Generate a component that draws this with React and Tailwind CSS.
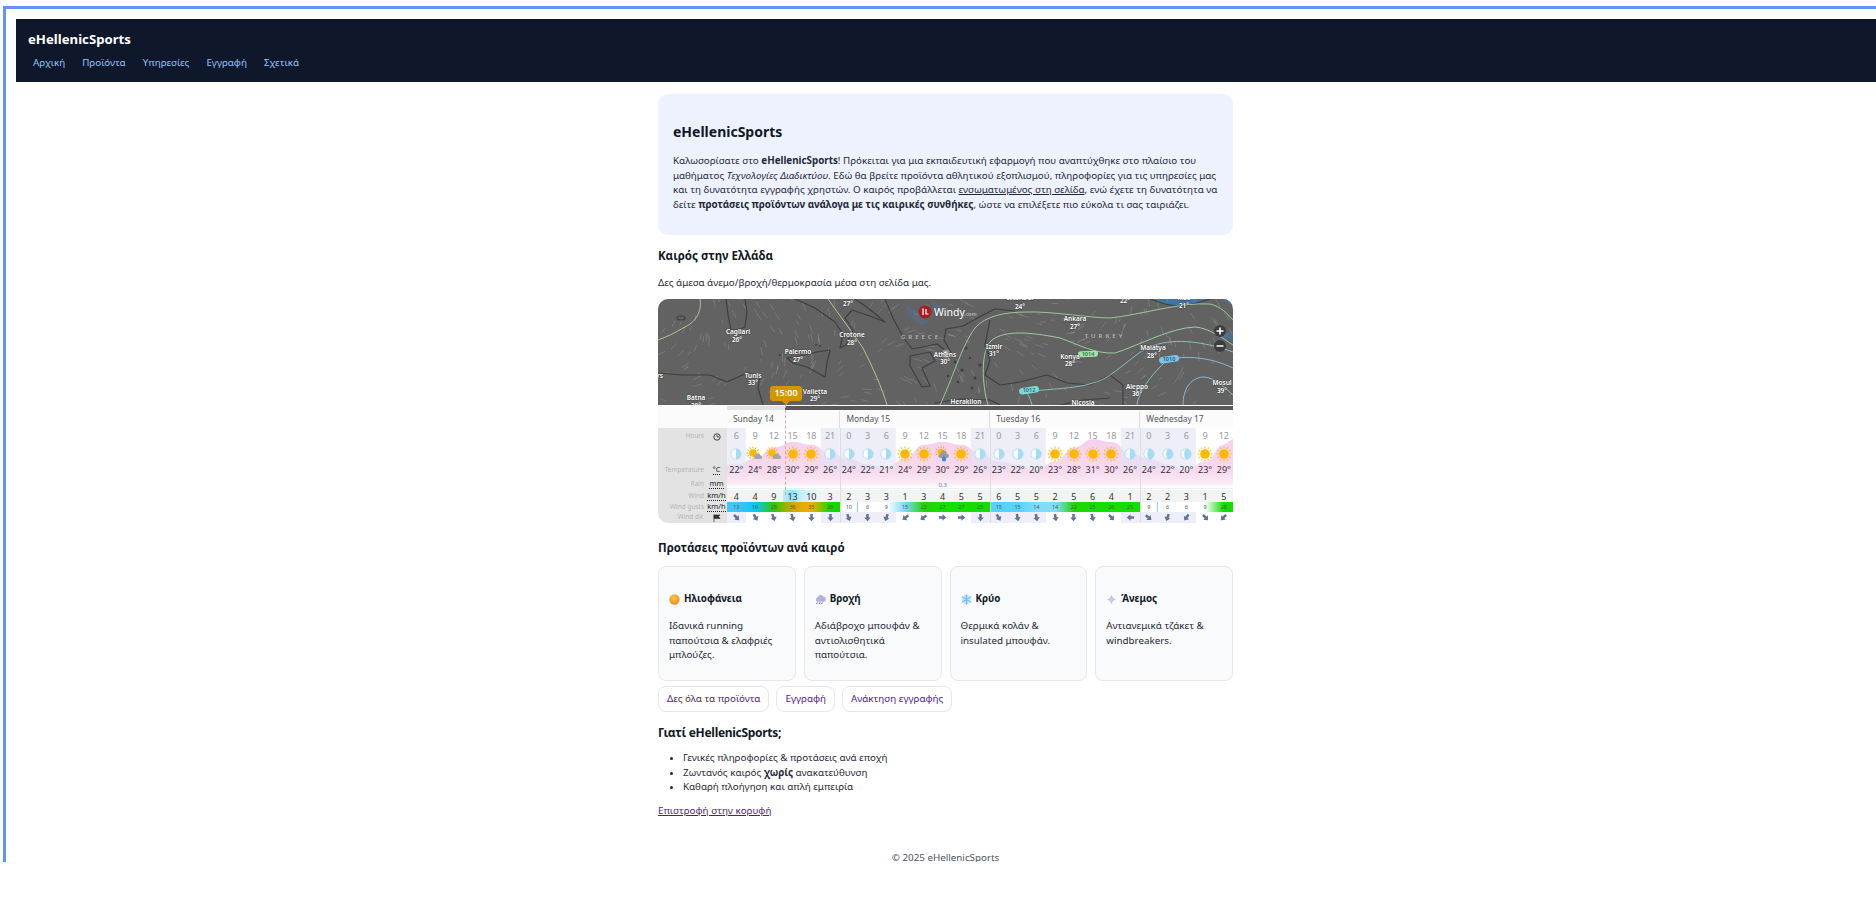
import React from 'react';

const COL = 18.75;
const days = [
  { name: 'Sunday 14', hours: [6, 9, 12, 15, 18, 21] },
  { name: 'Monday 15', hours: [0, 3, 6, 9, 12, 15, 18, 21] },
  { name: 'Tuesday 16', hours: [0, 3, 6, 9, 12, 15, 18, 21] },
  { name: 'Wednesday 17', hours: [0, 3, 6, 9, 12] },
];
const hours = days.flatMap((d) => d.hours);
const temps = [22, 24, 28, 30, 29, 26, 24, 22, 21, 24, 29, 30, 29, 26, 23, 22, 20, 23, 28, 31, 30, 26, 24, 22, 20, 23, 29];
const wind = [4, 4, 9, 13, 10, 3, 2, 3, 3, 1, 3, 4, 5, 5, 6, 5, 5, 2, 5, 6, 4, 1, 2, 2, 3, 1, 5];
const gusts = [13, 16, 28, 36, 35, 26, 10, 6, 9, 15, 22, 27, 27, 25, 15, 15, 14, 14, 22, 25, 26, 25, 9, 6, 6, 9, 28];
const gustColors = [
  '#45c4f5', '#08c8f8', '#30c800', '#d4a800', '#efae00', '#12d800',
  '#ffffff', '#ffffff', '#ffffff', '#7ad8fb', '#22d400', '#14e000', '#14e000', '#14dc00',
  '#55d4fb', '#55d4fb', '#80dcfa', '#80dcfa', '#22d400', '#14dc00', '#14e000', '#14dc00',
  '#ffffff', '#ffffff', '#ffffff', '#ffffff', '#14dc00',
];
const dirs = [135, 150, 160, 165, 180, 180, 160, 180, 200, 235, 235, 90, 90, 180, 150, 170, 170, 170, 180, 165, 135, 270, 130, 200, 215, 135, 225];
const icons = ['moon', 'cloudsun', 'cloudsun', 'sun', 'sun', 'moon', 'moon', 'moon', 'moon', 'sun', 'sun', 'rain', 'sun', 'moon', 'moon', 'moon', 'moon', 'sun', 'sun', 'sun', 'sun', 'moon', 'gibbous', 'gibbous', 'gibbous', 'sun', 'sun'];
const night = hours.map((h) => h <= 6 || h === 21);
const dayLines = [112.5, 262.5, 412.5];

function curvePath() {
  const pts = temps.map((t, i) => [(i + 0.5) * COL, 42 - (t - 20) * 2.8]);
  let d = `M0 ${pts[0][1]} L${pts[0][0]} ${pts[0][1]}`;
  for (let i = 1; i < pts.length; i++) {
    const mx = (pts[i - 1][0] + pts[i][0]) / 2;
    d += ` C${mx} ${pts[i - 1][1]} ${mx} ${pts[i][1]} ${pts[i][0]} ${pts[i][1]}`;
  }
  return `${d} L506.25 ${pts[pts.length - 1][1] - 6} L506.25 60 L0 60 Z`;
}

function gustGradient(start, count) {
  const stops = [];
  for (let i = 0; i < count; i++) {
    stops.push(`${gustColors[start + i]} ${((i + 0.5) / count) * 100}%`);
  }
  return `linear-gradient(to right, ${stops.join(', ')})`;
}

function particles() {
  let seed = 42;
  const rnd = () => {
    seed = (seed * 16807) % 2147483647;
    return seed / 2147483647;
  };
  const out = [];
  for (let i = 0; i < 300; i++) {
    const x = 658 + rnd() * 575;
    const y = 299 + rnd() * 106;
    const a = Math.sin(x / 70) * 1.3 + Math.cos(y / 34) * 0.9;
    const l = 3 + rnd() * 6;
    out.push(`M${x.toFixed(1)} ${y.toFixed(1)} L${(x + Math.cos(a) * l).toFixed(1)} ${(y + Math.sin(a) * l).toFixed(1)}`);
  }
  return out.join(' ');
}

const mapLabels = [
  ['Cagliari', 738, 334], ['26°', 737, 342], ['27°', 848, 306], ['Crotone', 852, 337], ['28°', 852, 345],
  ['Palermo', 798, 354], ['27°', 798, 362], ['Tunis', 753, 378], ['33°', 753, 385], ['Valletta', 815, 394],
  ['29°', 815, 401], ['Batna', 696, 400], ['28°', 696, 408], ['rs', 660, 378], ['Athens', 945, 357], ['30°', 945, 364],
  ['Istanbul', 1020, 300], ['24°', 1020, 309], ['22°', 1125, 303], ['Rize', 1184, 300], ['21°', 1184, 308],
  ['Ankara', 1075, 321], ['27°', 1075, 329], ['Malatya', 1153, 350], ['28°', 1152, 358], ['Konya', 1070, 359],
  ['28°', 1070, 366], ['Izmir', 994, 349], ['31°', 994, 356], ['Aleppo', 1137, 389], ['36°', 1137, 396],
  ['Mosul', 1222, 385], ['39°', 1222, 393], ['Heraklion', 966, 404], ['Nicosia', 1083, 405],
];

function WeatherMap() {
  return (
    <svg viewBox="658 299 575 106" className="block h-[106px] w-[575px]">
      <rect x="658" y="299" width="575" height="106" fill="#626262" />
      <path d="M1150 299 L1165 304 L1182 307 L1200 302 L1210 299 Z" fill="#3f74a8" />
      <path d="M1222 299 L1233 306 L1233 299 Z" fill="#3f74a8" />
      <path d="M1215 336 L1233 340 L1233 331 Z" fill="#4a739c" opacity="0.7" />
      <path d="M905 305 L918 312 L930 322 L920 325 L908 315 Z M930 300 L945 308 L938 314 Z" fill="#4f7192" opacity="0.5" />
      <path d={particles()} stroke="#ffffff" strokeOpacity="0.22" strokeWidth="0.7" fill="none" strokeLinecap="round" className="blur-[0.3px]" />
      <g stroke="#3f3f3f" strokeWidth="1.2" fill="none" strokeLinejoin="round" className="blur-[0.3px]">
        <path d="M726 299 L728 315 L731 330 L738 330 L745 327 L747 312 L745 299" />
        <path d="M787 358 L800 356 L817 352 L830 350 L827 363 L825 377 L807 367 L793 363 Z" />
        <path d="M795 299 L815 308 L835 322 L843 334 L840 348 L846 345 L853 330 L845 318 L852 310 L870 316 L885 322 L868 308 L855 299" />
        <path d="M658 373 L683 375 L710 375 L727 382 L747 373 L760 375 L758 388 L763 405" />
        <path d="M885 299 L893 318 L903 337 L912 349 L937 344 L953 356 L944 340 L946 329 L963 326 L981 316 L995 309 L1015 311" />
        <path d="M910 356 L930 352 L935 361 L922 368 L930 386 L922 387 L910 366 Z" />
        <path d="M990 320 L985 345 L990 360 L985 375 L1000 385 L1020 382 L1047 375 L1067 383 L1090 385 L1110 375 L1123 385 L1123 405" />
        <path d="M935 403 L960 399 L990 400 L1000 405" />
        <path d="M1060 405 L1083 400 L1110 398" />
        <path d="M1150 299 L1165 304 L1182 307 L1200 302 L1210 299" />
        <ellipse cx="681" cy="318" rx="4" ry="2" />
      </g>
      <g fill="#3f3f3f">
        <circle cx="955" cy="362" r="1.4" /><circle cx="962" cy="370" r="1.6" /><circle cx="970" cy="358" r="1.2" />
        <circle cx="975" cy="378" r="1.5" /><circle cx="958" cy="382" r="1.3" /><circle cx="980" cy="365" r="1.7" />
        <circle cx="966" cy="348" r="1.5" /><circle cx="972" cy="388" r="1.3" /><circle cx="948" cy="376" r="1.2" />
        <circle cx="816" cy="345" r="1" /><circle cx="820" cy="346" r="1" /><circle cx="780" cy="355" r="1" />
      </g>
      <g fill="none" strokeWidth="0.9">
        <path d="M700 299 C702 310 697 322 683 328 C675 333 666 337 658 340" stroke="#b9cf96" />
        <path d="M828 299 C840 316 852 332 863 348 C873 368 882 388 887 405" stroke="#b9cf96" />
        <path d="M940 405 C952 380 962 345 975 328 C985 316 1005 312 1027 312 C1050 311 1090 318 1110 318 C1140 315 1180 302 1210 304 C1220 306 1228 314 1233 320" stroke="#a3d39c" />
        <path d="M988 405 C982 385 980 350 992 340 C1005 330 1030 332 1060 338 C1080 345 1095 354 1115 353 C1140 345 1170 328 1195 327 C1210 328 1225 340 1233 345" stroke="#a3d6a8" />
        <path d="M1032 405 C1030 398 1028 394 1026 392 C1050 388 1090 390 1110 375 C1125 365 1140 350 1150 347 C1170 338 1200 340 1233 352" stroke="#8cc8c8" />
        <path d="M1137 405 C1138 395 1146 380 1167 360 C1185 355 1210 357 1233 368" stroke="#8fc3e0" />
        <path d="M1183 405 C1183 390 1190 378 1203 377 C1215 377 1225 388 1233 395" stroke="#8fc3e0" />
      </g>
      <g className="text-[5.5px] font-semibold" textAnchor="middle">
        <rect x="1078" y="351" width="20" height="6" rx="3" fill="#9fe8a8" transform="rotate(-3 1088 354)" />
        <text x="1088" y="356" fill="#3e6a46">1014</text>
        <rect x="1019" y="387" width="20" height="6.5" rx="3.2" fill="#7fd8d8" transform="rotate(-8 1029 390)" />
        <text x="1029" y="392" fill="#35686a">1012</text>
        <rect x="1159" y="356" width="20" height="6.5" rx="3.2" fill="#7cc4ee" transform="rotate(-8 1169 359)" />
        <text x="1169" y="361" fill="#2e5a78">1010</text>
      </g>
      <circle cx="946" cy="354" r="4.5" fill="#ffffff" opacity="0.35" />
      <circle cx="946" cy="354" r="2.5" fill="#ffffff" />
      <g className="text-[6.5px] font-semibold" textAnchor="middle" fill="#ffffff" stroke="#4a4a4a" strokeWidth="1" paintOrder="stroke">
        {mapLabels.map(([t, x, y]) => (
          <text key={`${t}${x}`} x={x} y={y}>{t}</text>
        ))}
      </g>
      <g className="text-[6px] font-semibold tracking-[3px]" fill="#b5b5b5" textAnchor="middle">
        <text x="921" y="339">GREECE</text>
        <text x="1105" y="338">TURKEY</text>
      </g>
      <circle cx="925" cy="312" r="6.5" fill="#a81c22" />
      <path d="M923 308.5 V315 M926 309 V314 H928.5" stroke="#ffffff" strokeWidth="1.2" fill="none" />
      <text x="934" y="316" fill="#ffffff" className="text-[10.5px]">Windy</text>
      <text x="964" y="316" fill="#c8c8c8" className="text-[5.5px]">.com</text>
      <circle cx="1220" cy="331" r="6" fill="#3d3d3d" />
      <path d="M1216.5 331 H1223.5 M1220 327.5 V334.5" stroke="#ffffff" strokeWidth="1.6" />
      <circle cx="1220" cy="346" r="6" fill="#3d3d3d" />
      <path d="M1216.5 346 H1223.5" stroke="#ffffff" strokeWidth="1.6" />
    </svg>
  );
}

function SunShape({ cx = 8, cy = 8, r = 4.8 }) {
  const rays = [0, 30, 60, 90, 120, 150, 180, 210, 240, 270, 300, 330];
  return (
    <g>
      {rays.map((a) => {
        const c = Math.cos((a * Math.PI) / 180);
        const s = Math.sin((a * Math.PI) / 180);
        return <line key={a} x1={cx + c * (r + 0.8)} y1={cy + s * (r + 0.8)} x2={cx + c * (r + 2.7)} y2={cy + s * (r + 2.7)} stroke="#ffb300" strokeWidth="1" />;
      })}
      <circle cx={cx} cy={cy} r={r} fill="#ffb800" />
    </g>
  );
}

function WeatherIcon({ type }) {
  return (
    <svg width="18" height="16" viewBox="0 0 18 16" className="block">
      {type === 'sun' && <SunShape cx={9} />}
      {(type === 'moon' || type === 'gibbous') && (
        <g>
          <circle cx="9" cy="8" r="5.2" fill="#ffffff" fillOpacity="0.7" stroke="#a9dcf2" strokeWidth="0.8" />
          {type === 'moon' ? (
            <path d="M9 2.8 A5.2 5.2 0 0 1 9 13.2 Z" fill="#a6dcf3" />
          ) : (
            <path d="M9 2.8 A5.2 5.2 0 0 1 9 13.2 A8 8 0 0 1 9 2.8 Z" fill="#a6dcf3" />
          )}
        </g>
      )}
      {type === 'cloudsun' && (
        <g>
          <SunShape cx={7} cy={7} r={3.8} />
          <path d="M9 13 a2.2 2.2 0 0 1 .6 -4.2 a2.8 2.8 0 0 1 5 .6 a1.9 1.9 0 0 1 .4 3.6 Z" fill="#a6a6a6" />
        </g>
      )}
      {type === 'rain' && (
        <g>
          <SunShape cx={7} cy={6} r={3.2} />
          <path d="M6 12 a2.4 2.4 0 0 1 .6 -4.6 a3 3 0 0 1 6 .4 a2.1 2.1 0 0 1 .4 4.2 Z" fill="#9a9a9a" />
          <path d="M10 9.5 l2 3 a2.2 2.2 0 1 1 -4 0 Z" fill="#2f8ee0" />
        </g>
      )}
    </svg>
  );
}

function WindArrow({ angle }) {
  return (
    <svg width="9" height="9" viewBox="0 0 10 10" className="block">
      <path d="M3.6 1 H6.4 V5 H8.6 L5 9.2 L1.4 5 H3.6 Z" fill="#5f7499" transform={`rotate(${angle - 180} 5 5)`} />
    </svg>
  );
}

function LabelRow({ h, label, unit }) {
  return (
    <div className={`flex items-center justify-end gap-[3px] pr-[1px] ${h}`}>
      {label && <span className="text-[6.5px] text-[#b4b4b4]">{label}</span>}
      <span className="flex w-[19px] justify-center">{unit}</span>
    </div>
  );
}

function Unit({ children }) {
  return <span className="border-b border-dotted border-[#222222] text-[7.5px] leading-[9px] text-[#222222]">{children}</span>;
}

function Cells({ items, className, render }) {
  return (
    <div className={`grid grid-cols-[repeat(27,18.75px)] ${className}`}>
      {items.map((v, i) => (
        <div key={i} className="flex items-center justify-center">
          {render ? render(v, i) : v}
        </div>
      ))}
    </div>
  );
}

function Forecast() {
  let start = 0;
  const segments = days.map((d) => {
    const seg = { ...d, start };
    start += d.hours.length;
    return seg;
  });
  return (
    <div className="bg-[#fbfbfb]">
      <div className="h-px bg-white" />
      <div className="flex h-[4px]">
        <div className="w-[69px] bg-[#fbfbfb]" />
        <div className="w-[58px] bg-[#e2e2e2]" />
        <div className="flex-1 bg-[#595959]" />
      </div>
      <div className="flex h-[18px] pl-[69px]">
        {segments.map((d, i) => (
          <div
            key={d.name}
            style={{ width: d.hours.length * COL }}
            className={`mt-[1px] flex items-center pl-[6px] text-[8.4px] text-[#555555] ${i > 0 ? 'border-l border-[#dddddd]' : ''}`}
          >
            {d.name}
          </div>
        ))}
      </div>
      <div className="flex">
        <div className="w-[69px] shrink-0 rounded-bl-[10px] bg-[#e3e3e3]">
          <LabelRow h="h-[17px]" label="Hours" unit={
            <svg width="8" height="8" viewBox="0 0 8 8"><circle cx="4" cy="4" r="3.2" fill="none" stroke="#333333" strokeWidth="0.9" /><path d="M4 2 V4 H6" fill="none" stroke="#333333" strokeWidth="0.8" /></svg>
          } />
          <div className="h-[17px]" />
          <LabelRow h="h-[16px]" label="Temperature" unit={<Unit>°C</Unit>} />
          <LabelRow h="h-[12px]" label="Rain" unit={<Unit>mm</Unit>} />
          <LabelRow h="h-[12px]" label="Wind" unit={<Unit>km/h</Unit>} />
          <LabelRow h="h-[10px]" label="Wind gusts" unit={<Unit>km/h</Unit>} />
          <LabelRow h="h-[11px]" label="Wind dir." unit={
            <svg width="8" height="8" viewBox="0 0 8 8"><path d="M1 0.5 V8 M1 1 H7 L5.5 2.7 L7 4.5 H1 Z" stroke="#333333" strokeWidth="0.7" fill="#333333" /></svg>
          } />
        </div>
        <div className="relative w-[506.25px] bg-white">
          <svg width="506.25" height="95" viewBox="0 0 506.25 95" className="absolute left-0 top-0">
            <defs>
              <linearGradient id="tempFill" gradientUnits="userSpaceOnUse" x1="0" y1="11" x2="0" y2="60">
                <stop offset="0" stopColor="#f5d0ee" />
                <stop offset="0.65" stopColor="#f7d9ee" />
                <stop offset="0.9" stopColor="#fbebf5" />
                <stop offset="1" stopColor="#ffffff" />
              </linearGradient>
            </defs>
            <path d={curvePath()} fill="url(#tempFill)" />
            {night.map((n, i) => n && <rect key={i} x={i * COL} y="0" width={COL} height="42" fill="#e2e3f4" fillOpacity="0.62" />)}
            <rect x="0" y="60" width="506.25" height="0.6" fill="#cfeef0" />
          </svg>
          <div className="relative">
            <Cells items={hours} className="h-[17px] text-[9px] text-[#999999]" />
            <Cells items={icons} className="h-[17px]" render={(t) => <WeatherIcon type={t} />} />
            <Cells items={temps} className="h-[16px] text-[9px] text-[#333333]" render={(t) => `${t}°`} />
            <div className="grid h-[12px] grid-cols-[repeat(27,18.75px)]">
              <div className="col-start-12 flex items-center justify-center text-[6px] text-[#5a78d8]">0.3</div>
            </div>
            <div className="bg-[#f3f3f3]">
              <Cells
                items={wind}
                className="h-[12px] text-[9px] text-[#333333]"
                render={(w, i) => (
                  i === 3
                    ? <span className="flex h-full w-full items-center justify-center bg-linear-to-r from-[#b9eef8] via-[#8fe3f7] to-[#c9f1f8]">{w}</span>
                    : i === 4
                      ? <span className="flex h-full w-full items-center justify-center bg-linear-to-r from-[#c9f1f8] to-[#f3f3f3]">{w}</span>
                      : w
                )}
              />
            </div>
            <div className="relative flex h-[10px]">
              {segments.map((d) => (
                <div
                  key={d.name}
                  style={{ width: d.hours.length * COL, backgroundImage: gustGradient(d.start, d.hours.length) }}
                  className="flex text-[5.5px] text-[#555555]"
                >
                  {d.hours.map((_, i) => (
                    <span key={i} className="flex w-[18.75px] items-center justify-center">{gusts[d.start + i]}</span>
                  ))}
                </div>
              ))}
              <div className="absolute left-[130px] top-0 h-full w-px bg-[#7fe0d0]" />
              <div className="absolute left-[430px] top-0 h-full w-px bg-[#8fdcf5]" />
            </div>
            <Cells
              items={dirs}
              className="h-[11px]"
              render={(a, i) => (
                <span className={`flex h-full w-full items-center justify-center ${night[i] ? 'bg-[#eeeef8]' : ''}`}>
                  <WindArrow angle={a} />
                </span>
              )}
            />
            {dayLines.map((x) => (
              <div key={x} style={{ left: x }} className="absolute inset-y-0 w-px bg-[#dddddd]" />
            ))}
          </div>
        </div>
      </div>
    </div>
  );
}

function SunEmoji() {
  return (
    <svg width="11" height="11" viewBox="0 0 10 10">
      <defs>
        <radialGradient id="sunE" cx="0.45" cy="0.35" r="0.7">
          <stop offset="0" stopColor="#ffc83d" />
          <stop offset="1" stopColor="#ea8a1f" />
        </radialGradient>
      </defs>
      <circle cx="5" cy="5" r="4.7" fill="url(#sunE)" />
    </svg>
  );
}

function RainEmoji() {
  return (
    <svg width="11" height="11" viewBox="0 0 10 10">
      <path d="M2 7 a2 2 0 0 1 .3 -3.8 a3 3 0 0 1 5.6 -.6 a2.2 2.2 0 0 1 -.4 4.4 Z" fill="#b5aee6" />
      <path d="M1.5 9 l.6 -1.2 M3.8 9 l.6 -1.2 M6 9 l.6 -1.2" stroke="#3c4fd0" strokeWidth="0.9" />
    </svg>
  );
}

function SnowEmoji() {
  return (
    <svg width="11" height="11" viewBox="0 0 11 11" stroke="#6cc0f2" strokeWidth="1.1" strokeLinecap="round">
      <circle cx="5.5" cy="5.5" r="4.6" fill="#cfeafb" stroke="none" />
      <path d="M5.5 .7 V10.3 M1.3 3.1 L9.7 7.9 M9.7 3.1 L1.3 7.9" />
      <path d="M4 1.6 L5.5 3 L7 1.6 M4 9.4 L5.5 8 L7 9.4" fill="none" strokeWidth="0.7" />
    </svg>
  );
}

function WindEmoji() {
  return (
    <svg width="11" height="11" viewBox="0 0 10 10">
      <path d="M5 0.5 C5.6 3.5 6.5 4.4 9.5 5 C6.5 5.6 5.6 6.5 5 9.5 C4.4 6.5 3.5 5.6 .5 5 C3.5 4.4 4.4 3.5 5 .5 Z" fill="#c4b8dc" />
      <circle cx="5" cy="5" r="2.2" fill="#cfc6e4" />
    </svg>
  );
}

const cards = [
  { icon: <SunEmoji />, title: 'Ηλιοφάνεια', text: 'Ιδανικά running παπούτσια & ελαφριές μπλούζες.' },
  { icon: <RainEmoji />, title: 'Βροχή', text: 'Αδιάβροχο μπουφάν & αντιολισθητικά παπούτσια.' },
  { icon: <SnowEmoji />, title: 'Κρύο', text: 'Θερμικά κολάν & insulated μπουφάν.' },
  { icon: <WindEmoji />, title: 'Άνεμος', text: 'Αντιανεμικά τζάκετ & windbreakers.' },
];

const navLinks = ['Αρχική', 'Προϊόντα', 'Υπηρεσίες', 'Εγγραφή', 'Σχετικά'];
const buttons = ['Δες όλα τα προϊόντα', 'Εγγραφή', 'Ανάκτηση εγγραφής'];

export default function App() {
  return (
    <div className="h-[917px] overflow-hidden bg-white pl-[3px] pt-[6px] font-['Noto_Sans',sans-serif] text-[9.8px] leading-[14.5px] text-[#1f2937]">
      <div className="h-[856px] overflow-hidden border-l-[3px] border-t-[3px] border-[#6495ed] pl-[10px] pt-[10px]">
        <header className="h-[63px] bg-[#0f172a] pl-[12px] pt-[11px]">
          <div className="text-[13.2px] font-bold leading-[18px] text-white">eHellenicSports</div>
          <nav className="mt-[8px] flex gap-[17px] pl-[5px]">
            {navLinks.map((l) => (
              <a key={l} href="#" className="text-[#93c5fd]">{l}</a>
            ))}
          </nav>
        </header>

        <main className="ml-[642px] w-[575px] pt-[12px]">
          <section className="h-[141px] rounded-[10px] bg-[#eef2ff] px-[15px] pt-[26px]">
            <h1 className="text-[14px] font-bold leading-[24px] text-[#111827]">eHellenicSports</h1>
            <p className="mt-[10px]">
              Καλωσορίσατε στο <strong>eHellenicSports</strong>! Πρόκειται για μια εκπαιδευτική εφαρμογή που αναπτύχθηκε στο πλαίσιο του μαθήματος <em>Τεχνολογίες Διαδικτύου</em>. Εδώ θα βρείτε προϊόντα αθλητικού εξοπλισμού, πληροφορίες για τις υπηρεσίες μας και τη δυνατότητα εγγραφής χρηστών. Ο καιρός προβάλλεται <u>ενσωματωμένος στη σελίδα</u>, ενώ έχετε τη δυνατότητα να δείτε <strong>προτάσεις προϊόντων ανάλογα με τις καιρικές συνθήκες</strong>, ώστε να επιλέξετε πιο εύκολα τι σας ταιριάζει.
            </p>
          </section>

          <h2 className="mt-[12px] text-[11.5px] font-bold leading-[18px] text-[#111827]">Καιρός στην Ελλάδα</h2>
          <p className="mt-[11px]">Δες άμεσα άνεμο/βροχή/θερμοκρασία μέσα στη σελίδα μας.</p>

          <div className="mt-[8.5px] h-[225px] overflow-hidden rounded-[10px]">
            <div className="relative">
              <WeatherMap />
              <div className="absolute left-[112px] top-[87px] flex h-[15px] w-[32px] items-center justify-center rounded-[3px] bg-[#d49500] text-[9px] font-semibold text-white">
                15:00
              </div>
              <div className="absolute left-[124px] top-[102px] h-0 w-0 border-x-[4px] border-t-[4px] border-x-transparent border-t-[#d49500]" />
              <div className="absolute left-[127px] top-[106px] z-10 h-[90px] border-l border-dashed border-[#d9a5a5]" />
            </div>
            <Forecast />
          </div>

          <h2 className="mt-[15px] text-[11.5px] font-bold leading-[18px] text-[#111827]">Προτάσεις προϊόντων ανά καιρό</h2>
          <div className="mt-[9px] grid grid-cols-4 gap-[8px]">
            {cards.map((c) => (
              <div key={c.title} className="h-[115px] rounded-[8px] border border-[#e5e7eb] bg-[#f8fafc] px-[10px] pt-[24px]">
                <h3 className="flex h-[16px] items-center gap-[4px] text-[9.8px] font-bold text-[#111827]">
                  {c.icon}
                  {c.title}
                </h3>
                <p className="mt-[12px]">{c.text}</p>
              </div>
            ))}
          </div>
          <div className="mt-[5px] flex gap-[7px]">
            {buttons.map((b) => (
              <a key={b} href="#" className="flex h-[26px] items-center rounded-[8px] border border-[#e5e7eb] px-[8px] text-[#551a8b]">{b}</a>
            ))}
          </div>

          <h2 className="mt-[12px] text-[12px] font-bold leading-[18px] tracking-[-0.3px] text-[#111827]">Γιατί eHellenicSports;</h2>
          <ul className="mt-[9px] list-disc pl-[25px]">
            <li>Γενικές πληροφορίες &amp; προτάσεις ανά εποχή</li>
            <li>Ζωντανός καιρός <strong>χωρίς</strong> ανακατεύθυνση</li>
            <li>Καθαρή πλοήγηση και απλή εμπειρία</li>
          </ul>
          <p className="mt-[9.5px]"><a href="#" className="text-[#551a8b] underline">Επιστροφή στην κορυφή</a></p>
          <footer className="mt-[32px] text-center text-[#4b5563]">© 2025 eHellenicSports</footer>
        </main>
      </div>
    </div>
  );
}
